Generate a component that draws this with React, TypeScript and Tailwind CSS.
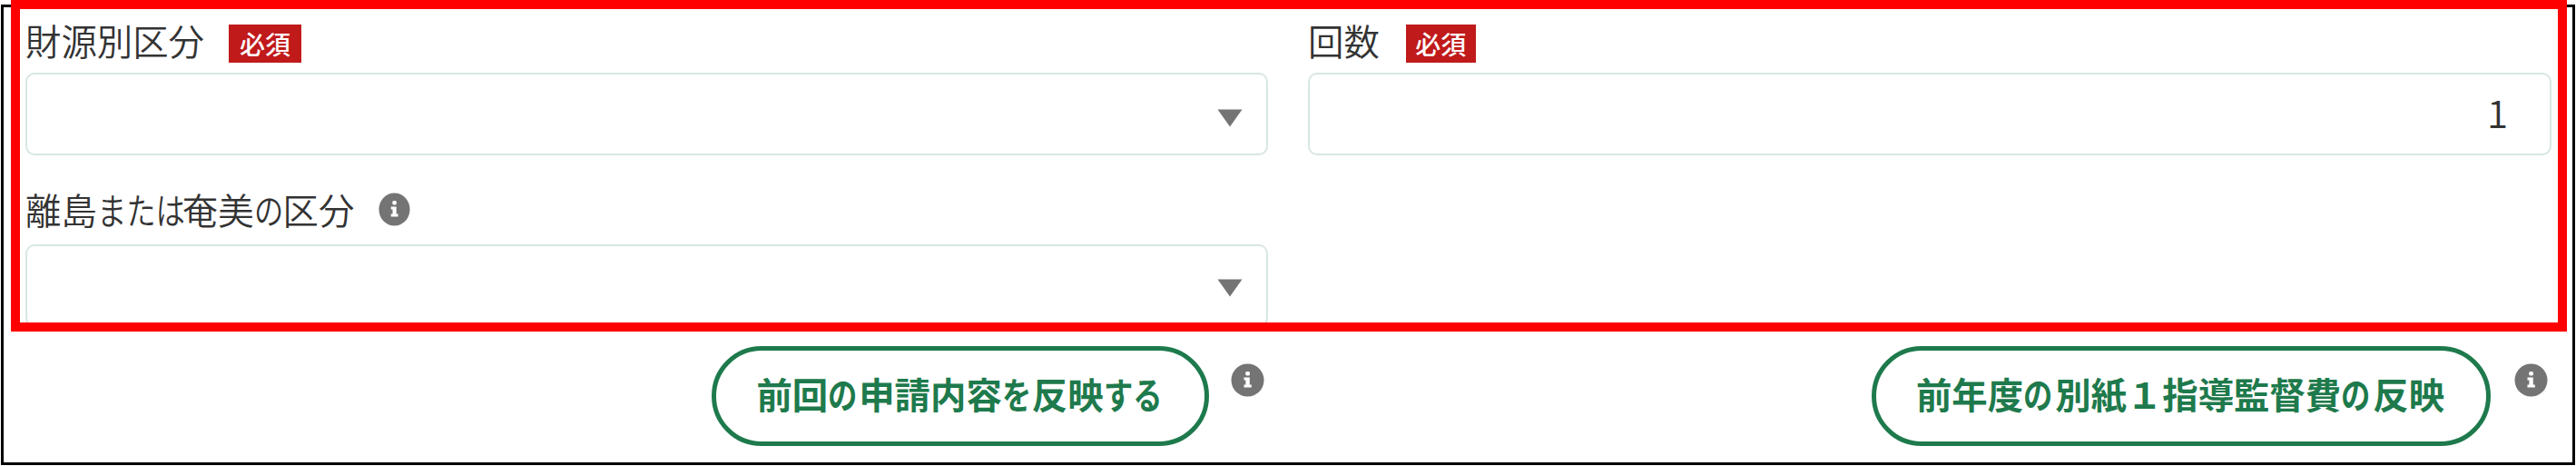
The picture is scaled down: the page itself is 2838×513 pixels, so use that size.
import type { ReactNode } from "react";

function InfoIcon({ className }: { className: string }) {
  return (
    <svg viewBox="0 0 37 37" preserveAspectRatio="none" className={className}>
      <circle cx="18.5" cy="18.5" r="18" fill="#747474" />
      <rect x="16.2" y="9" width="4.8" height="4.4" rx="1.6" fill="#fff" />
      <path d="M14.5 15.5H20.8V23.5H22.8V26.5H14.5V23.5H16.4V18.5H14.5Z" fill="#fff" />
    </svg>
  );
}

function Required({ className }: { className: string }) {
  return (
    <span
      className={`mt-[3px] flex h-[42px] items-center justify-center bg-[#c01a1b] text-[28px] leading-none font-medium text-white ${className}`}
    >
      必須
    </span>
  );
}

// 幅の狭い仮名
function Kana({ children, className }: { children: ReactNode; className: string }) {
  return (
    <span className={`inline-block whitespace-nowrap ${className}`}>
      <span className="inline-block origin-left scale-x-[0.82]">{children}</span>
    </span>
  );
}

function SelectBox({ arrowClass }: { arrowClass: string }) {
  return (
    <div className="flex h-[91px] items-start justify-end rounded-[10px] border-2 border-[#d8e7e1] pr-[26px]">
      <svg viewBox="0 0 28 20" className={`h-5 w-7 ${arrowClass}`}>
        <path d="M0.5 0.5H27.5L14 19.5Z" fill="#747474" />
      </svg>
    </div>
  );
}

export default function App() {
  return (
    <div className="h-[513px] w-[2838px] overflow-hidden bg-white pt-[5px] pl-px font-['Noto_Sans_CJK_JP',sans-serif] text-[39.4px] leading-none text-[#333]">
      <div className="relative h-[507px] w-[2836px] border-3 border-black pl-6">
        <div className="grid grid-cols-[1369px_1370px] gap-x-11 font-[350]">
          <div>
            <div className="flex h-[72px] items-start pt-4">
              <span>財源別区分</span>
              <Required className="ml-[27px] w-20" />
            </div>
            <SelectBox arrowClass="mt-[38px]" />
          </div>
          <div>
            <div className="flex h-[72px] items-start pt-4">
              <span>回数</span>
              <Required className="ml-[29px] w-[77px]" />
            </div>
            <div className="flex h-[91px] items-center justify-end rounded-[10px] border-2 border-[#d8e7e1] pr-[46px] pb-[5px] text-[42px]">
              <span>1</span>
            </div>
          </div>
          <div>
            <div className="flex h-[98px] items-start pt-[39px]">
              <span className="flex">
                離島
                <Kana className="w-[94px]">または</Kana>
                奄美
                <Kana className="w-[32px]">の</Kana>
                区分
              </span>
              <InfoIcon className="mt-[2px] ml-[27px] h-[37px] w-[35px]" />
            </div>
            <SelectBox arrowClass="mt-9" />
          </div>
        </div>

        <div className="mt-[21px] grid grid-cols-[1369px_1370px] gap-x-11 font-bold text-[#1e7a4c]">
          <div className="flex justify-end pr-1">
            <button className="flex h-[110px] w-[548px] items-center justify-center rounded-full border-[5px] border-[#1e7a4c] pr-0.5 pb-[6px] whitespace-nowrap">
              前回
              <Kana className="w-[34px]">の</Kana>
              申請内容
              <Kana className="w-[33px]">を</Kana>
              反映
              <Kana className="w-[65px]">する</Kana>
            </button>
            <InfoIcon className="mt-[19px] ml-6 h-[37px] w-[37px]" />
          </div>
          <div className="flex justify-end pr-1">
            <button className="flex h-[110px] w-[682px] items-center justify-center rounded-full border-[5px] border-[#1e7a4c] pr-0.5 pb-[6px] whitespace-nowrap">
              前年度
              <Kana className="w-[35px]">の</Kana>
              別紙１指導監督費
              <Kana className="w-[35px]">の</Kana>
              反映
            </button>
            <InfoIcon className="mt-[19px] ml-[26px] h-[37px] w-[37px]" />
          </div>
        </div>

        {/* 赤枠 */}
        <div className="absolute -top-2 left-2 h-[365px] w-[2816px] border-[10px] border-[#ff0000]" />
      </div>
    </div>
  );
}
